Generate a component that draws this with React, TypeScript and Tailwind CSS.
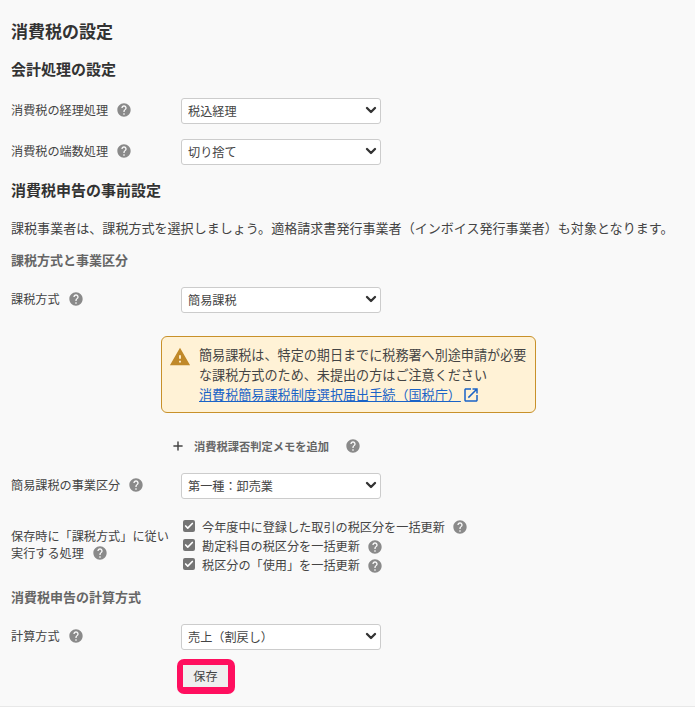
import React from 'react';
import { Check, ChevronDown, Plus } from 'lucide-react';

const font = { fontFamily: '"Noto Sans CJK JP", sans-serif' };

function Help({ className = '' }: { className?: string }) {
  return (
    <svg viewBox="0 0 24 24" className={`h-[16px] w-[16px] shrink-0 fill-[#8a8a8a] ${className}`}>
      <path d="M12 2C6.48 2 2 6.48 2 12s4.48 10 10 10 10-4.48 10-10S17.52 2 12 2zm1 17h-2v-2h2v2zm2.07-7.75l-.9.92C13.45 12.9 13 13.5 13 15h-2v-.5c0-1.1.45-2.1 1.17-2.83l1.24-1.26c.37-.36.59-.86.59-1.41 0-1.1-.9-2-2-2s-2 .9-2 2H8c0-2.21 1.79-4 4-4s4 1.79 4 4c0 .88-.36 1.68-.93 2.25z" />
    </svg>
  );
}

function SelectRow({ label, value, helpClass, className = '' }: { label: string; value: string; helpClass: string; className?: string }) {
  return (
    <div className={`flex h-[26px] items-center ${className}`}>
      <div className="flex w-[170px] items-center text-[12.15px] text-[#444]">
        <span>{label}</span>
        <Help className={helpClass} />
      </div>
      <div className="relative h-[26px] w-[200px]">
        <select
          defaultValue={value}
          className="h-full w-full appearance-none rounded-[3px] border border-[#ccc] bg-white pl-[6px] text-[12.15px] text-[#444]"
        >
          <option>{value}</option>
        </select>
        <ChevronDown className="pointer-events-none absolute right-[2px] top-[5px] h-[16px] w-[16px] text-[#333]" strokeWidth={3.5} />
      </div>
    </div>
  );
}

function CheckItem({ label, className = '' }: { label: string; className?: string }) {
  return (
    <label className={`flex items-center text-[12.15px] text-[#444] ${className}`}>
      <span className="mb-[3px] ml-[2px] flex h-[12px] w-[12px] items-center justify-center rounded-[2px] bg-[#757575]">
        <Check className="h-[10px] w-[10px] text-white" strokeWidth={4} />
      </span>
      <span className="ml-[7px]">{label}</span>
      <Help className="ml-[7px]" />
    </label>
  );
}

export default function App() {
  return (
    <div className="h-[714px] overflow-hidden bg-white" style={font}>
      <div className="h-[707px] border-b border-[#e8e8e8] bg-[#f9f9f9] pl-[11px] pt-[20px]">
        <h1 className="text-[17px] font-bold leading-[22px] text-[#333]">消費税の設定</h1>
        <h2 className="mt-[17px] text-[15px] font-bold leading-[20px] text-[#333]">会計処理の設定</h2>

        <SelectRow className="mt-[18px]" label="消費税の経理処理" value="税込経理" helpClass="ml-[8px]" />
        <SelectRow className="mt-[15px]" label="消費税の端数処理" value="切り捨て" helpClass="ml-[8px]" />

        <h2 className="mt-[16px] text-[15px] font-bold leading-[20px] text-[#333]">消費税申告の事前設定</h2>
        <p className="mt-[18px] whitespace-nowrap text-[13.05px] leading-[20px] text-[#444]">
          課税事業者は、課税方式を選択しましょう。適格請求書発行事業者（インボイス発行事業者）も対象となります。
        </p>
        <h3 className="mt-[12px] text-[13px] font-bold leading-[20px] text-[#666]">課税方式と事業区分</h3>

        <SelectRow className="mt-[16px]" label="課税方式" value="簡易課税" helpClass="ml-[8px]" />

        <div className="ml-[150px] mt-[24px] flex h-[77px] w-[375px] rounded-[6px] border border-[#c8912a] bg-[#fff2d6] pl-[7px] pt-[8px]">
          <svg viewBox="0 0 24 24" className="mt-[1px] h-[22px] w-[22px] shrink-0 fill-[#c0892a]">
            <path d="M1 21h22L12 2 1 21zm12-3h-2v-2h2v2zm0-4h-2v-4h2v4z" />
          </svg>
          <div className="ml-[8px] text-[13.1px] leading-[20px] text-[#444]">
            <div className="whitespace-nowrap">簡易課税は、特定の期日までに税務署へ別途申請が必要</div>
            <div className="whitespace-nowrap">な課税方式のため、未提出の方はご注意ください</div>
            <div className="flex items-center whitespace-nowrap">
              <a className="text-[#1a63c7] underline">消費税簡易課税制度選択届出手続（国税庁）</a>
              <svg viewBox="0 0 24 24" className="ml-[1px] h-[18px] w-[18px] shrink-0 fill-[#1a63c7]">
                <path d="M19 19H5V5h7V3H5c-1.11 0-2 .9-2 2v14c0 1.1.89 2 2 2h14c1.1 0 2-.9 2-2v-7h-2v7zM14 3v2h3.59l-9.83 9.83 1.41 1.41L19 6.41V10h2V3h-7z" />
              </svg>
            </div>
          </div>
        </div>

        <div className="ml-[160px] mt-[23px] flex h-[20px] items-center text-[11.25px] font-bold text-[#666]">
          <Plus className="h-[14px] w-[14px] text-[#444]" strokeWidth={2.5} />
          <span className="ml-[9px]">消費税課否判定メモを追加</span>
          <Help className="ml-[16px]" />
        </div>

        <SelectRow className="mt-[16px]" label="簡易課税の事業区分" value="第一種：卸売業" helpClass="ml-[8px]" />

        <div className="mt-[19px] flex">
          <div className="mt-[10px] w-[170px] text-[12.15px] leading-[17px] text-[#444]">
            <div className="whitespace-nowrap">保存時に「課税方式」に従い</div>
            <div className="flex items-center">
              実行する処理
              <Help className="ml-[8px]" />
            </div>
          </div>
          <div className="flex flex-col">
            <CheckItem className="h-[20px]" label="今年度中に登録した取引の税区分を一括更新" />
            <CheckItem className="h-[19px]" label="勘定科目の税区分を一括更新" />
            <CheckItem className="h-[19px]" label="税区分の「使用」を一括更新" />
          </div>
        </div>

        <h3 className="mt-[12px] text-[13px] font-bold leading-[20px] text-[#666]">消費税申告の計算方式</h3>

        <SelectRow className="mt-[16px]" label="計算方式" value="売上（割戻し）" helpClass="ml-[8px]" />

        <div className="ml-[166px] mt-[10px] h-[35px] w-[58px] rounded-[7px] bg-[#ff0f5f] p-[6px]">
          <button className="flex h-[22px] w-[45px] items-center justify-center bg-[#efefef] text-[12.15px] text-[#444]">
            保存
          </button>
        </div>
      </div>
    </div>
  );
}
